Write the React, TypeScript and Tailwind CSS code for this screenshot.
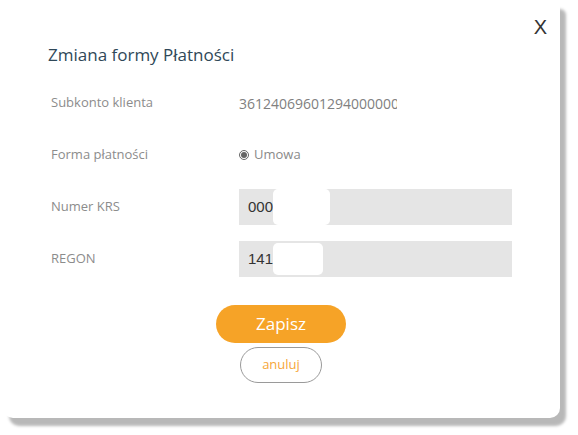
import { useState } from 'react'

const ORANGE = 'bg-[#f6a327]'

export default function App() {
  const [forma, setForma] = useState('umowa')

  return (
    <main className="w-[578px] h-[435px] bg-white overflow-hidden pt-[1px] pl-[3px] font-['Open_Sans','Noto_Sans',sans-serif]">
      <div className="w-[557px] h-[417px] bg-white rounded-t-[6px] rounded-b-[10px] shadow-[6px_8px_3px_rgba(0,0,0,0.28)] flex flex-col">
        <div className="flex justify-end pt-[13px] pr-[13px] h-[38px]">
          <button className="text-[20px] leading-[22px] font-light text-[#333] font-['Liberation_Sans',sans-serif]">
            X
          </button>
        </div>

        <h1 className="pl-[45px] mt-[5px] text-[17px] leading-[22px] text-[#2f4858]">
          Zmiana formy Płatności
        </h1>

        <div className="pl-[48px] mt-[19px] grid grid-cols-[188px_273px] auto-rows-[36px] gap-y-[16px] text-[13px] text-[#8c8c8c]">
          <div className="flex items-center">Subkonto klienta</div>
          <div className="flex items-center text-[14px] text-[#808080] overflow-hidden w-[158px] whitespace-nowrap">
            36124069601294000000
          </div>

          <div className="flex items-center">Forma płatności</div>
          <label className="flex items-center gap-[5px] text-[#8a8a8a]">
            <input
              type="radio"
              checked={forma === 'umowa'}
              onChange={() => setForma('umowa')}
              className="w-[10px] h-[10px] m-0 accent-[#666]"
            />
            Umowa
          </label>

          <div className="flex items-center">Numer KRS</div>
          <div className="bg-[#e5e5e5] flex items-center pl-[9px] text-[15px] text-[#333] font-['Liberation_Sans',sans-serif]">
            <span>000</span>
            <span className="w-[57px] h-[36px] bg-white rounded-[5px]" />
          </div>

          <div className="flex items-center">REGON</div>
          <div className="bg-[#e5e5e5] flex items-center pl-[9px] text-[15px] text-[#333] font-['Liberation_Sans',sans-serif]">
            <span>141</span>
            <span className="w-[50px] h-[32px] bg-white rounded-[5px]" />
          </div>
        </div>

        <div className="flex flex-col items-center mt-[28px] gap-[4px] pr-[1px]">
          <button className={`w-[130px] h-[38px] rounded-full ${ORANGE} text-white text-[17px] font-medium`}>
            Zapisz
          </button>
          <button className="w-[82px] h-[36px] rounded-full border border-[#9a9a9a] bg-white text-[#f6a638] text-[13px] font-medium">
            anuluj
          </button>
        </div>
      </div>
    </main>
  )
}
